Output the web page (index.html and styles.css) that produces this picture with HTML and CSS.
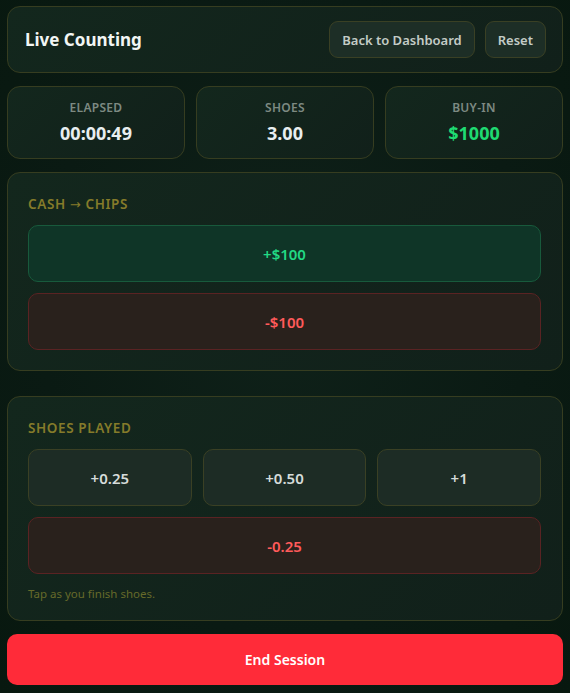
FILE: index.html
```html
<!DOCTYPE html>
<html>
<head>
<meta charset="utf-8">
<link rel="stylesheet" href="styles.css">
</head>
<body>
<div class="page">
  <header class="card header">
    <h1 class="title">Live Counting</h1>
    <div class="header-actions">
      <button class="btn-ghost">Back to Dashboard</button>
      <button class="btn-ghost">Reset</button>
    </div>
  </header>

  <section class="stats">
    <div class="card stat">
      <div class="stat-label">ELAPSED</div>
      <div class="stat-value">00:00:49</div>
    </div>
    <div class="card stat">
      <div class="stat-label">SHOES</div>
      <div class="stat-value">3.00</div>
    </div>
    <div class="card stat">
      <div class="stat-label">BUY-IN</div>
      <div class="stat-value green">$1000</div>
    </div>
  </section>

  <section class="card panel">
    <div class="panel-title">CASH <span class="arrow">→</span> CHIPS</div>
    <button class="btn-big btn-plus">+$100</button>
    <button class="btn-big btn-minus">-$100</button>
  </section>

  <section class="card panel shoes">
    <div class="panel-title">SHOES PLAYED</div>
    <div class="shoe-grid">
      <button class="btn-big btn-neutral">+0.25</button>
      <button class="btn-big btn-neutral">+0.50</button>
      <button class="btn-big btn-neutral">+1</button>
    </div>
    <button class="btn-big btn-minus">-0.25</button>
    <div class="hint">Tap as you finish shoes.</div>
  </section>

  <button class="btn-end">End Session</button>
</div>
</body>
</html>
```

FILE: styles.css
```css
* { box-sizing: border-box; }
html, body { margin: 0; padding: 0; }
body {
  background: radial-gradient(ellipse at 50% 45%, #0f2119 0%, #0a1a13 60%, #08180f 100%);
  font-family: "Noto Sans", "Open Sans", sans-serif;
  color: #e6ece8;
  width: 570px;
  height: 693px;
  overflow: hidden;
}
.page {
  padding: 6px 7px 0 7px;
  display: flex;
  flex-direction: column;
  gap: 13px;
}
.card {
  background: linear-gradient(135deg, #13271d 0%, #11201a 100%);
  border: 1px solid #363d20;
  border-radius: 13px;
}
.header {
  height: 67px;
  display: flex;
  align-items: center;
  justify-content: space-between;
  padding: 0 16px 0 17px;
}
.title {
  margin: 0;
  font-size: 17px;
  font-weight: 700;
  color: #f2f6f4;
}
.header-actions { display: flex; gap: 10px; }
.btn-ghost {
  height: 37px;
  padding: 0 12px;
  background: #1d2e26;
  border: 1px solid #3a4024;
  border-radius: 9px;
  color: #c4ccc6;
  font-family: inherit;
  font-size: 13px;
  font-weight: 600;
}
.stats {
  display: grid;
  grid-template-columns: 1fr 1fr 1fr;
  gap: 11px;
}
.stat {
  height: 73px;
  display: flex;
  flex-direction: column;
  align-items: center;
  justify-content: center;
  gap: 5px;
}
.stat-label {
  font-size: 12px;
  line-height: 16px;
  font-weight: 600;
  color: #7d8a82;
  letter-spacing: 0.3px;
}
.stat-value {
  font-size: 18px;
  line-height: 24px;
  font-weight: 700;
  color: #e8eef0;
}
.stat-value.green { color: #1fdb72; }
.panel {
  padding: 21px 21px 20px 20px;
  display: flex;
  flex-direction: column;
  gap: 11px;
}
.panel-title {
  height: 20px;
  font-size: 13.5px;
  line-height: 20px;
  font-weight: 600;
  color: #857b2a;
  letter-spacing: 0.6px;
  overflow: visible;
}
.arrow {
  font-family: "DejaVu Sans", sans-serif;
  font-weight: 400;
  font-size: 13px;
  line-height: 1;
}
.shoes { margin-top: 12px; }
.btn-big {
  height: 57px;
  width: 100%;
  border-radius: 10px;
  font-family: inherit;
  font-size: 15px;
  font-weight: 600;
}
.btn-plus {
  background: #0f3527;
  border: 1px solid #185a3c;
  color: #22d984;
}
.btn-minus {
  background: #29211c;
  border: 1px solid #5a2323;
  color: #ff5a5a;
}
.btn-neutral {
  background: #1d2c25;
  border: 1px solid #3a4024;
  color: #d6dcda;
}
.shoe-grid {
  display: grid;
  grid-template-columns: 1fr 1fr 1fr;
  gap: 11px;
}
.hint {
  font-size: 11.5px;
  line-height: 15px;
  color: #666a2a;
  margin-top: 1px;
  margin-bottom: -1px;
}
.btn-end {
  height: 51px;
  width: 100%;
  background: #ff2b39;
  border: none;
  border-radius: 10px;
  color: #ffffff;
  font-family: inherit;
  font-size: 14px;
  font-weight: 600;
}
```
